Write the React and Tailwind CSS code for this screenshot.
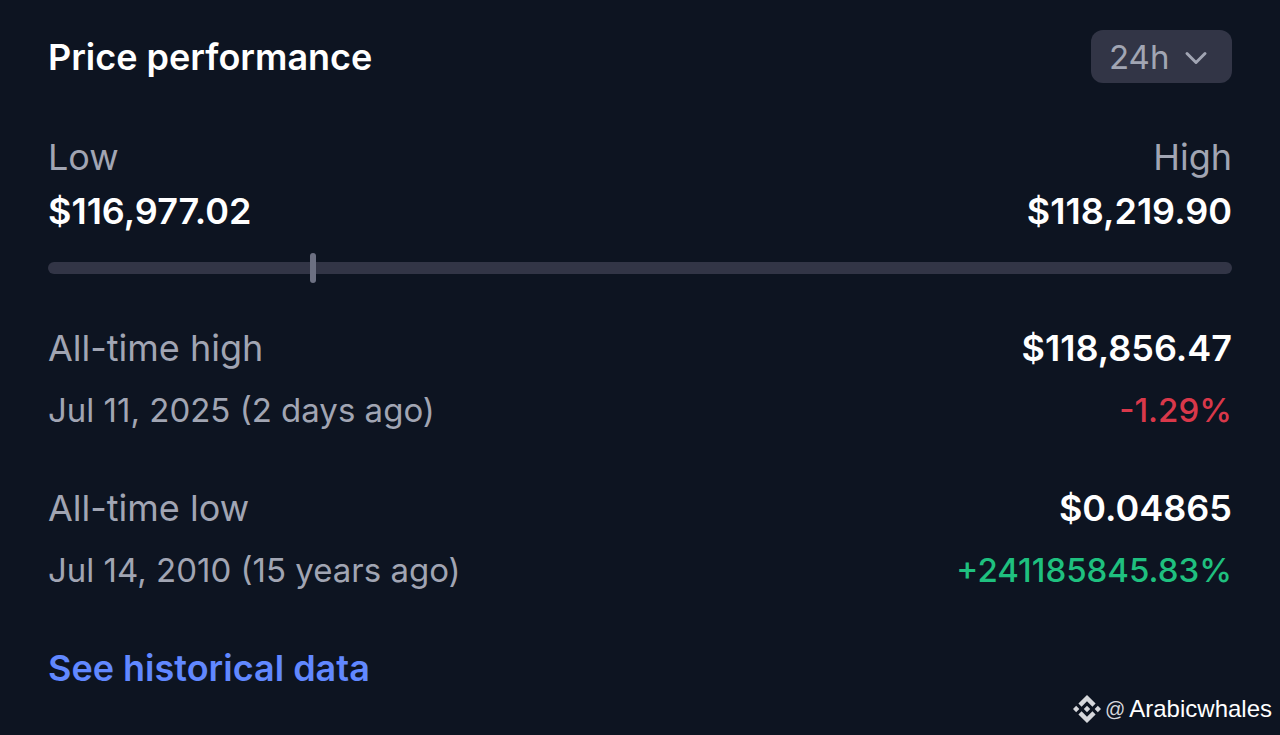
import { ChevronDown } from 'lucide-react';

const records = [
  { label: 'All-time high', date: 'Jul 11, 2025 (2 days ago)', price: '$118,856.47', change: '-1.29%', color: 'text-[#d9384a]' },
  { label: 'All-time low', date: 'Jul 14, 2010 (15 years ago)', price: '$0.04865', change: '+241185845.83%', color: 'text-[#1fc07f]' },
];

const range = { min: 116977.02, max: 118219.9, current: 117252 };

function Watermark() {
  return (
    <div className="absolute right-2 bottom-3 flex items-center gap-1 font-['Liberation_Sans',sans-serif] text-2xl leading-7 text-white">
      <svg viewBox="0 0 126.61 126.61" className="size-7 fill-[#d5d7db]" aria-hidden="true">
        <path d="M38.73 53.2l24.59-24.58 24.6 24.6 14.3-14.31L63.32 0 24.43 38.9zM0 63.31L14.3 49l14.31 14.31-14.31 14.3zM38.73 73.41l24.59 24.59 24.6-24.6 14.31 14.29-38.9 38.91-38.91-38.88zM98 63.31L112.3 49l14.31 14.3-14.31 14.32zM77.83 63.3L63.32 48.78 48.79 63.3l14.53 14.53z" />
      </svg>
      <span className="text-xl leading-7 text-[#d5d7db]">@</span>
      <span>Arabicwhales</span>
    </div>
  );
}

export default function App() {
  const position = ((range.current - range.min) / (range.max - range.min)) * 100;

  return (
    <main className="relative min-h-screen bg-[#0d1421] px-12 pt-[30px] pb-10 font-['Inter',sans-serif] text-4xl leading-12 text-[#a1a5b3]">
      {/* Header */}
      <header className="flex items-center justify-between">
        <h1 className="font-semibold text-white">Price performance</h1>
        <div className="relative">
          <select aria-label="Period" defaultValue="24h" className="block h-[53px] w-[141px] appearance-none rounded-xl bg-[#323546] pl-[18px] text-[33px]">
            <option>24h</option>
          </select>
          <ChevronDown className="pointer-events-none absolute top-2.5 right-[18px] size-9" />
        </div>
      </header>

      {/* Daily range */}
      <section className="mt-[50px]">
        <div className="flex justify-between">
          <div>
            <p>Low</p>
            <p className="mt-1.5 font-semibold text-white">$116,977.02</p>
          </div>
          <div className="text-right">
            <p>High</p>
            <p className="mt-1.5 font-semibold text-white">$118,219.90</p>
          </div>
        </div>
        <div className="relative mt-[27px] h-3 rounded-full bg-[#323546]">
          <span className="absolute -top-[9px] h-[30px] w-1.5 rounded-full bg-[#6c7082]" style={{ left: `${position}%` }} />
        </div>
      </section>

      {/* All-time records */}
      {records.map((item) => (
        <section key={item.label} className="mt-[50px] flex justify-between">
          <div>
            <p>{item.label}</p>
            <p className="mt-[14px] text-[33px]">{item.date}</p>
          </div>
          <div className="text-right">
            <p className="font-semibold text-white">{item.price}</p>
            <p className={`mt-[14px] text-[33px] font-medium ${item.color}`}>{item.change}</p>
          </div>
        </section>
      ))}

      <a href="#history" className="mt-[50px] inline-block font-semibold text-[#6188ff]">See historical data</a>
      <Watermark />
    </main>
  );
}
